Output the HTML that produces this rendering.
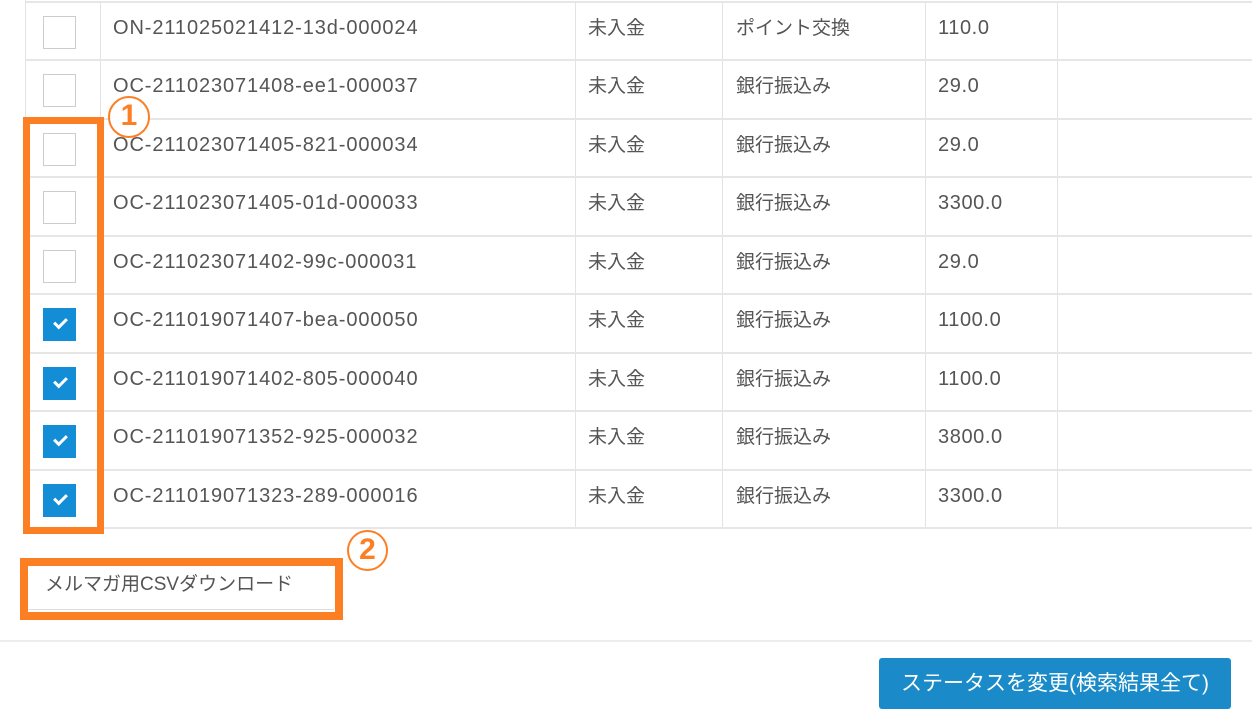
<!DOCTYPE html>
<html><head><meta charset="utf-8"><style>
body{margin:0;width:1252px;height:721px;background:#fff;position:relative;overflow:hidden;font-family:"Liberation Sans","Noto Sans CJK JP",sans-serif;color:#555;}
.r{position:absolute;left:25px;width:1240px;height:58.5px;border-bottom:2px solid #e6e6e6;box-sizing:border-box}
.v{position:absolute;top:0;width:1px;height:100%;background:#e3e3e3}
.t{position:absolute;line-height:24px;top:13px;white-space:nowrap}
.id{left:88px;font-size:20px;letter-spacing:0.9px}
.s{left:563px;font-size:19px;top:14px}
.m{left:711px;font-size:19px;top:14px}
.a{left:913px;font-size:20px;letter-spacing:0.6px}
.cb{position:absolute;left:18px;top:13px;width:33px;height:33px;border:1px solid #ccc;box-sizing:border-box;background:#fff}
.cb.on{background:#128dd6;border-color:#128dd6}
.cb.on:after{content:"";position:absolute;left:10px;top:9px;width:10px;height:5px;border-left:3px solid #fff;border-bottom:3px solid #fff;transform:rotate(-45deg)}
.ob{position:absolute;border:7px solid #fd7f24;box-sizing:border-box}
.circ{position:absolute;border:2px solid #fd7f24;border-radius:50%;color:#fd7f24;font-weight:bold;font-size:30px;text-align:center;box-sizing:border-box;background:#fff;line-height:36px}
</style></head><body>
<div style="position:absolute;left:25px;top:0;width:1px;height:530px;background:#e3e3e3"></div>
<div class="r" style="top:-56px"></div>
<div class="r" style="top:2.5px"><div class="v" style="left:75px"></div><div class="v" style="left:550px"></div><div class="v" style="left:697px"></div><div class="v" style="left:900px"></div><div class="v" style="left:1032px"></div><div class="cb"></div><span class="t id">ON-211025021412-13d-000024</span><span class="t s">未入金</span><span class="t m">ポイント交換</span><span class="t a">110.0</span></div>
<div class="r" style="top:61px"><div class="v" style="left:75px"></div><div class="v" style="left:550px"></div><div class="v" style="left:697px"></div><div class="v" style="left:900px"></div><div class="v" style="left:1032px"></div><div class="cb"></div><span class="t id">OC-211023071408-ee1-000037</span><span class="t s">未入金</span><span class="t m">銀行振込み</span><span class="t a">29.0</span></div>
<div class="r" style="top:119.5px"><div class="v" style="left:75px"></div><div class="v" style="left:550px"></div><div class="v" style="left:697px"></div><div class="v" style="left:900px"></div><div class="v" style="left:1032px"></div><div class="cb"></div><span class="t id">OC-211023071405-821-000034</span><span class="t s">未入金</span><span class="t m">銀行振込み</span><span class="t a">29.0</span></div>
<div class="r" style="top:178px"><div class="v" style="left:75px"></div><div class="v" style="left:550px"></div><div class="v" style="left:697px"></div><div class="v" style="left:900px"></div><div class="v" style="left:1032px"></div><div class="cb"></div><span class="t id">OC-211023071405-01d-000033</span><span class="t s">未入金</span><span class="t m">銀行振込み</span><span class="t a">3300.0</span></div>
<div class="r" style="top:236.5px"><div class="v" style="left:75px"></div><div class="v" style="left:550px"></div><div class="v" style="left:697px"></div><div class="v" style="left:900px"></div><div class="v" style="left:1032px"></div><div class="cb"></div><span class="t id">OC-211023071402-99c-000031</span><span class="t s">未入金</span><span class="t m">銀行振込み</span><span class="t a">29.0</span></div>
<div class="r" style="top:295px"><div class="v" style="left:75px"></div><div class="v" style="left:550px"></div><div class="v" style="left:697px"></div><div class="v" style="left:900px"></div><div class="v" style="left:1032px"></div><div class="cb on"></div><span class="t id">OC-211019071407-bea-000050</span><span class="t s">未入金</span><span class="t m">銀行振込み</span><span class="t a">1100.0</span></div>
<div class="r" style="top:353.5px"><div class="v" style="left:75px"></div><div class="v" style="left:550px"></div><div class="v" style="left:697px"></div><div class="v" style="left:900px"></div><div class="v" style="left:1032px"></div><div class="cb on"></div><span class="t id">OC-211019071402-805-000040</span><span class="t s">未入金</span><span class="t m">銀行振込み</span><span class="t a">1100.0</span></div>
<div class="r" style="top:412px"><div class="v" style="left:75px"></div><div class="v" style="left:550px"></div><div class="v" style="left:697px"></div><div class="v" style="left:900px"></div><div class="v" style="left:1032px"></div><div class="cb on"></div><span class="t id">OC-211019071352-925-000032</span><span class="t s">未入金</span><span class="t m">銀行振込み</span><span class="t a">3800.0</span></div>
<div class="r" style="top:470.5px"><div class="v" style="left:75px"></div><div class="v" style="left:550px"></div><div class="v" style="left:697px"></div><div class="v" style="left:900px"></div><div class="v" style="left:1032px"></div><div class="cb on"></div><span class="t id">OC-211019071323-289-000016</span><span class="t s">未入金</span><span class="t m">銀行振込み</span><span class="t a">3300.0</span></div>
<div class="ob" style="left:23px;top:117px;width:81px;height:417px"></div>
<div class="circ" style="left:108px;top:96px;width:42px;height:42px">1</div>
<div class="ob" style="left:20px;top:558px;width:323px;height:62px;border-width:8px"></div>
<div style="position:absolute;left:28px;top:566px;width:306px;height:44px;border-bottom:1px solid #ddd;font-size:19px;line-height:38px;padding-left:17px;box-sizing:border-box">メルマガ用CSVダウンロード</div>
<div class="circ" style="left:347px;top:530px;width:41px;height:41px">2</div>
<div style="position:absolute;left:0;top:640px;width:1252px;height:2px;background:#ececec"></div>
<div style="position:absolute;left:879px;top:658px;width:352px;height:51px;background:#1a8bc8;border-radius:3px;color:#fff;font-size:21px;line-height:51px;text-align:center">ステータスを変更(検索結果全て)</div>
</body></html>
